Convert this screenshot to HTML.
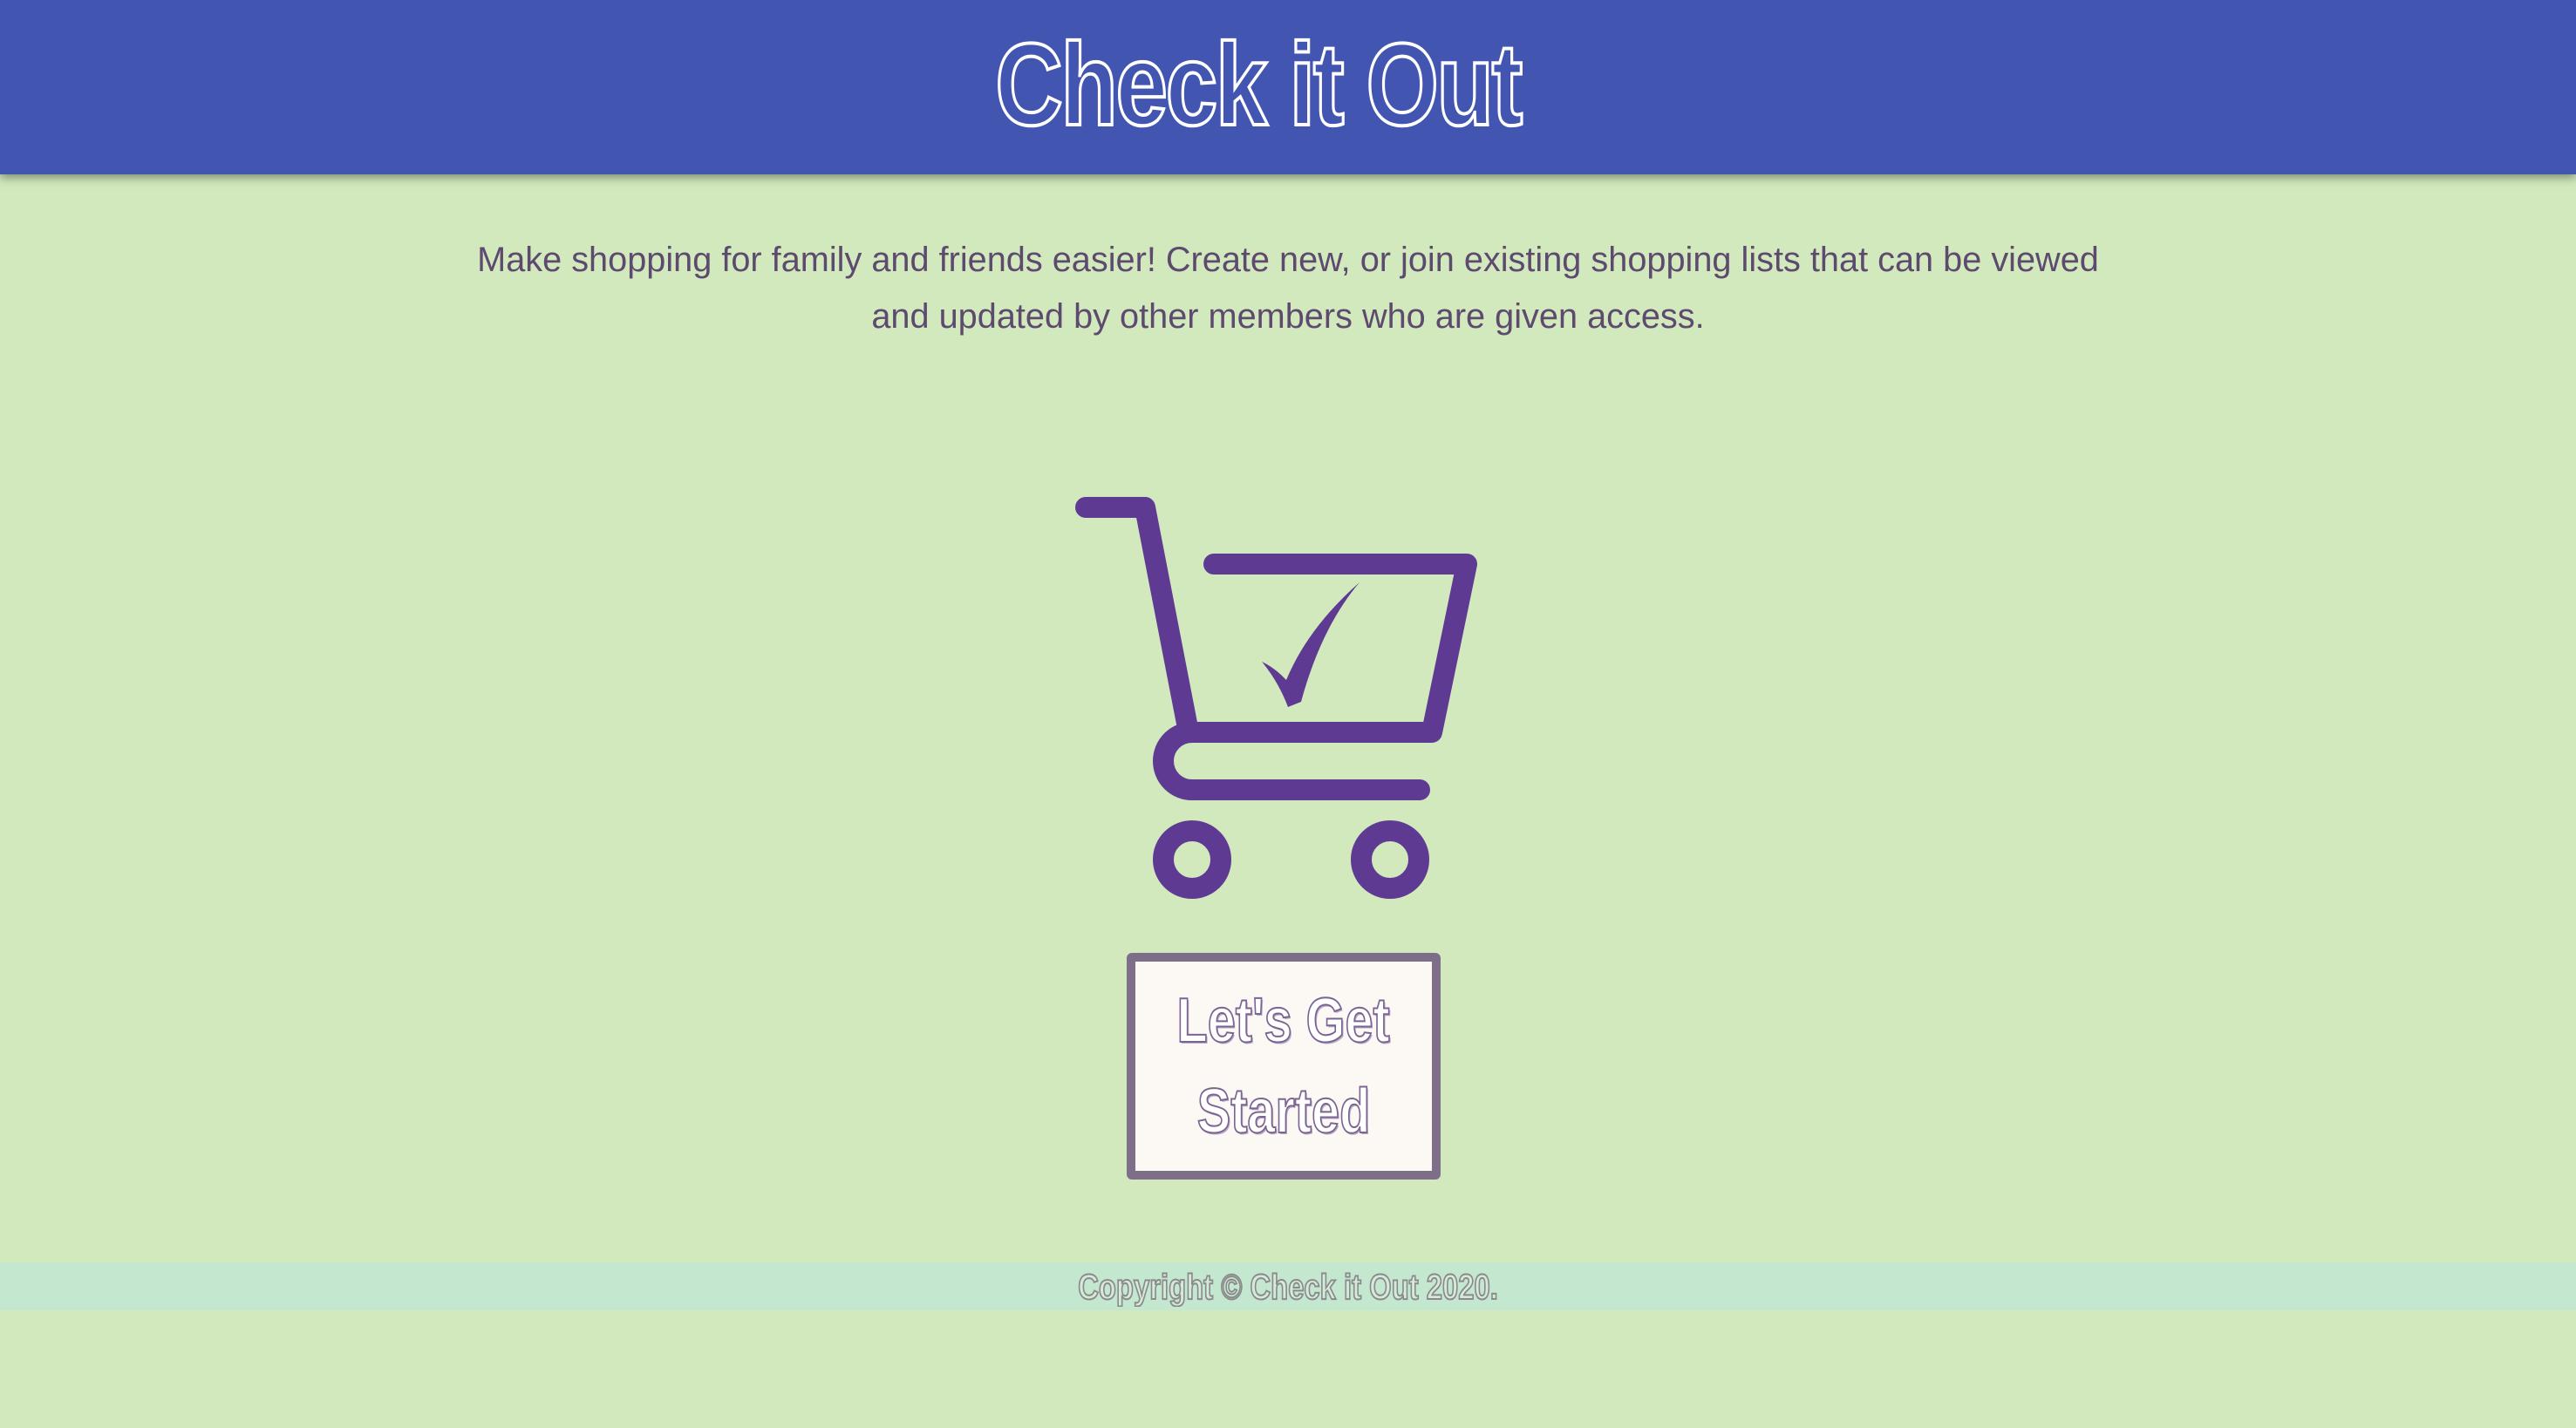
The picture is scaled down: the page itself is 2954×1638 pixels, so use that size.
<!DOCTYPE html>
<html><head><meta charset="utf-8"><style>
html,body{margin:0;padding:0;}
body{width:2954px;height:1638px;background:#d2e9bd;position:relative;overflow:hidden;font-family:"Liberation Sans",sans-serif;}
.hdr{position:absolute;left:0;top:0;width:2954px;height:200px;background:#4155b1;box-shadow:0 4px 10px rgba(60,70,60,.55);}
.c{position:absolute;left:0;width:100%;text-align:center;}
.c span{display:inline-block;transform:scaleX(0.8);transform-origin:center;white-space:nowrap;}
.title{top:18px;left:-34px;font-weight:bold;font-size:134px;line-height:160px;color:transparent;-webkit-text-stroke:4px #fff;letter-spacing:-3px;}
.para{position:absolute;left:0;width:2954px;top:266px;text-align:center;font-size:39.7px;line-height:65px;color:#5d4a6e;}
.btn{position:absolute;left:1292px;top:1093px;width:340px;height:240px;border:10px solid #7f6e8a;border-radius:6px;background:#fcf9f5;}
.btn .c{font-weight:bold;font-size:72px;line-height:72px;color:#fff;-webkit-text-stroke:2px #7b6491;text-shadow:2px 2px 0 #b9a9c9;}
.foot{position:absolute;left:0;top:1448px;width:2954px;height:55px;background:#c3e8cf;}
.foot .c{top:4px;font-weight:bold;font-size:41px;line-height:48px;color:#d6eadc;-webkit-text-stroke:2px #8a8a8a;}
</style></head><body>
<div class="hdr"><div class="c title"><span>Check it Out</span></div></div>
<div class="para">Make shopping for family and friends easier! Create new, or join existing shopping lists that can be viewed<br>and updated by other members who are given access.</div>
<svg style="position:absolute;left:0;top:0" width="2954" height="1638" viewBox="0 0 2954 1638">
<g fill="none" stroke="#5f3a93" stroke-width="24" stroke-linecap="round" stroke-linejoin="round">
<path d="M1245 582 L1313 582 L1363 840"/>
<path d="M1392 647 L1682 647 L1642 840 L1367 840 A33 33 0 0 0 1367 906 L1628 906"/>
<circle cx="1367" cy="986" r="33"/>
<circle cx="1594" cy="986" r="33"/>
</g>
<path fill="#5f3a93" d="M1447 759 Q1462 766 1475 780 Q1500 720 1559 668 Q1515 720 1492 805 L1477 811 Q1466 782 1447 759 Z"/>
</svg>
<div class="btn"><div class="c" style="top:32px"><span>Let's Get</span></div><div class="c" style="top:136px"><span>Started</span></div></div>
<div class="foot"><div class="c"><span>Copyright © Check it Out 2020.</span></div></div>
</body></html>
